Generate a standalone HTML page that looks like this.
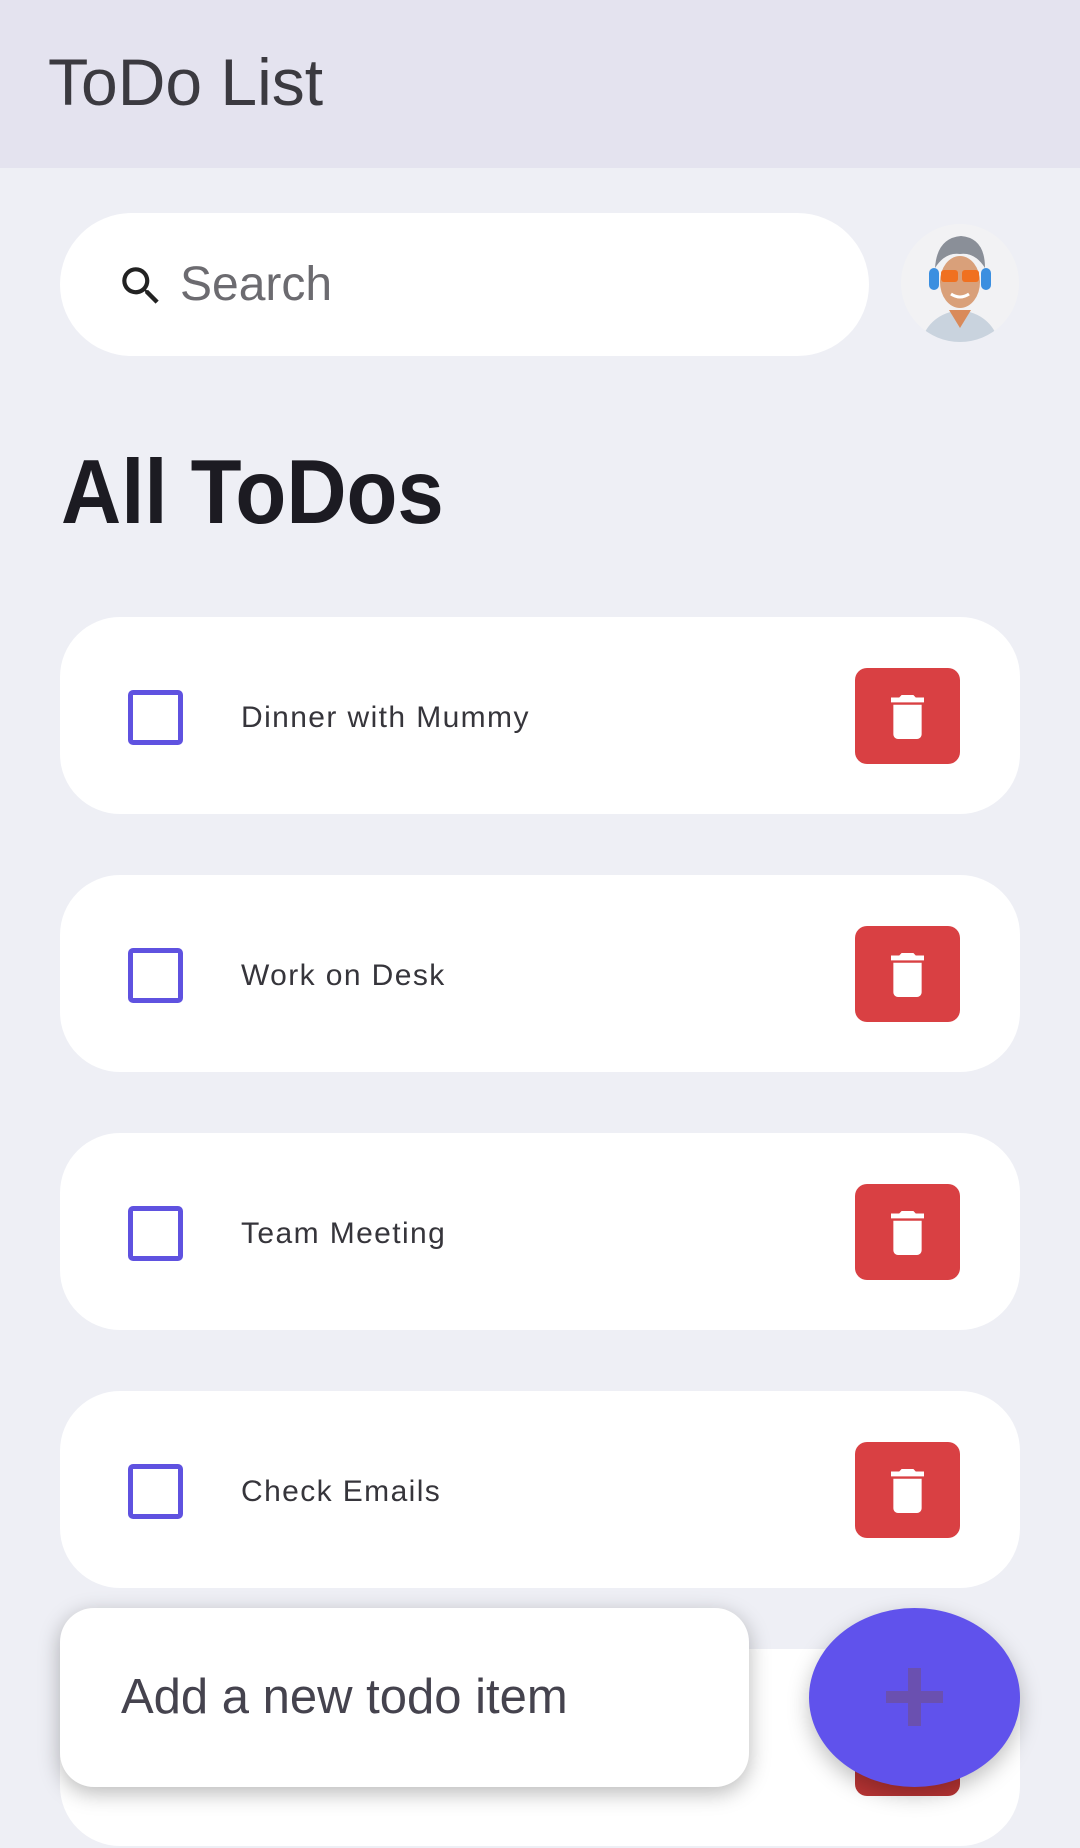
<!DOCTYPE html>
<html><head><meta charset="utf-8">
<style>
*{margin:0;padding:0;box-sizing:border-box}
body{width:1080px;height:1848px;overflow:hidden;background:#eeeff5;font-family:"Liberation Sans",sans-serif;position:relative}
.hdr{position:absolute;left:0;top:0;width:1080px;height:168px;background:#e4e3ef}
.hdr span{position:absolute;left:48px;top:49px;font-size:66px;line-height:1;color:#3b3a40}
.search{position:absolute;left:60px;top:213px;width:809px;height:143px;border-radius:72px;background:#fff}
.search span{position:absolute;left:120px;top:44px;font-size:48px;color:#6c6b70}
.avatar{position:absolute;left:901px;top:224px;width:118px;height:118px;border-radius:50%;background:#f2f2f4;overflow:hidden}
h1{position:absolute;left:61px;top:447px;font-size:91px;line-height:1;font-weight:bold;color:#1c1b22;letter-spacing:0;transform:scaleX(0.916);transform-origin:0 0;white-space:nowrap}
.card{position:absolute;left:60px;width:960px;height:197px;border-radius:60px;background:#fff}
.cb{position:absolute;left:68px;top:73px;width:55px;height:55px;border:5px solid #5f52e0;border-radius:5px}
.card .t{position:absolute;left:181px;top:84px;font-size:30px;color:#36353b;letter-spacing:1.4px}
.del{position:absolute;left:795px;top:51px;width:105px;height:96px;border-radius:12px;background:#d94043}
.add{position:absolute;left:60px;top:1608px;width:689px;height:179px;border-radius:34px;background:#fff;box-shadow:0 6px 22px rgba(0,0,0,.28)}
.add span{position:absolute;left:61px;top:61px;font-size:49px;color:#45434e}
.fab{position:absolute;left:809px;top:1608px;width:211px;height:179px;border-radius:50%;background:#6052ec;box-shadow:0 8px 22px rgba(0,0,0,.25)}
</style></head><body>
<div class="hdr"><span>ToDo List</span></div>
<div class="search">
<svg style="position:absolute;left:56px;top:48px" width="50" height="50" viewBox="0 0 24 24"><path fill="#222" d="M15.5 14h-.79l-.28-.27A6.47 6.47 0 0 0 16 9.5 6.5 6.5 0 1 0 9.5 16c1.61 0 3.09-.59 4.23-1.57l.27.28v.79l5 4.99L20.49 19l-4.99-5zm-6 0C7.01 14 5 11.99 5 9.5S7.01 5 9.5 5 14 7.01 14 9.5 11.990 14 9.5 14z"/></svg>
<span>Search</span></div>
<div class="avatar"><svg width="118" height="118" viewBox="0 0 118 118">
<path d="M20 118 Q28 90 59 86 Q90 90 98 118Z" fill="#c9d3de"/>
<path d="M48 86 L59 104 L70 86Z" fill="#d98a5a"/>
<ellipse cx="59" cy="58" rx="20" ry="26" fill="#d9a07a"/>
<path d="M34 44 Q36 14 60 12 Q84 14 84 44 Q74 28 59 30 Q44 28 34 44Z" fill="#8a8f98"/>
<rect x="28" y="44" width="10" height="22" rx="5" fill="#3b8fe0"/><rect x="80" y="44" width="10" height="22" rx="5" fill="#3b8fe0"/>
<rect x="40" y="46" width="17" height="12" rx="3" fill="#f07020"/><rect x="61" y="46" width="17" height="12" rx="3" fill="#f07020"/>
<path d="M50 70 Q59 76 68 70" stroke="#fff" stroke-width="3" fill="none"/>
</svg></div>
<h1>All ToDos</h1>

<div class="card" style="top:617px"><div class="cb"></div><div class="t">Dinner with Mummy</div><div class="del"><svg style="position:absolute;left:36px;top:27px" width="33" height="44" viewBox="5 3 14 18" preserveAspectRatio="none"><path fill="#fff" d="M6 19c0 1.1.9 2 2 2h8c1.1 0 2-.9 2-2V7H6v12zM19 4h-3.5l-1-1h-5l-1 1H5v2h14V4z"/></svg></div></div>
<div class="card" style="top:875px"><div class="cb"></div><div class="t">Work on Desk</div><div class="del"><svg style="position:absolute;left:36px;top:27px" width="33" height="44" viewBox="5 3 14 18" preserveAspectRatio="none"><path fill="#fff" d="M6 19c0 1.1.9 2 2 2h8c1.1 0 2-.9 2-2V7H6v12zM19 4h-3.5l-1-1h-5l-1 1H5v2h14V4z"/></svg></div></div>
<div class="card" style="top:1133px"><div class="cb"></div><div class="t">Team Meeting</div><div class="del"><svg style="position:absolute;left:36px;top:27px" width="33" height="44" viewBox="5 3 14 18" preserveAspectRatio="none"><path fill="#fff" d="M6 19c0 1.1.9 2 2 2h8c1.1 0 2-.9 2-2V7H6v12zM19 4h-3.5l-1-1h-5l-1 1H5v2h14V4z"/></svg></div></div>
<div class="card" style="top:1391px"><div class="cb"></div><div class="t">Check Emails</div><div class="del"><svg style="position:absolute;left:36px;top:27px" width="33" height="44" viewBox="5 3 14 18" preserveAspectRatio="none"><path fill="#fff" d="M6 19c0 1.1.9 2 2 2h8c1.1 0 2-.9 2-2V7H6v12zM19 4h-3.5l-1-1h-5l-1 1H5v2h14V4z"/></svg></div></div>
<div class="card" style="top:1649px"><div class="del" style="top:51px;background:#b83434"></div></div>

<div class="add"><span>Add a new todo item</span></div>
<div class="fab"><div style="position:absolute;left:77px;top:83px;width:57px;height:12px;background:#6a50b0"></div><div style="position:absolute;left:99px;top:60px;width:13px;height:58px;background:#6a50b0"></div></div>
</body></html>
